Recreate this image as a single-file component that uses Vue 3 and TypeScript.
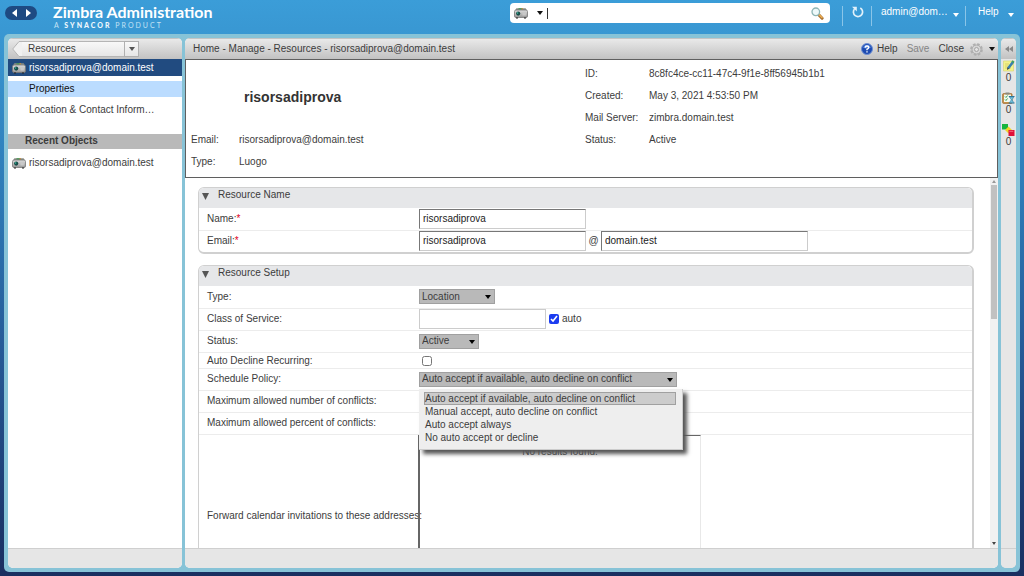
<script setup lang="ts">
import { ref } from 'vue'

const account = 'risorsadiprova@domain.test'
const search = ref('')
const resourceName = ref('risorsadiprova')
const localPart = ref('risorsadiprova')
const domain = ref('domain.test')
const cos = ref('')
const autoCos = ref(true)
const declineRecurring = ref(false)
const kind = ref('Location')
const status = ref('Active')

const policies: string[] = [
  'Auto accept if available, auto decline on conflict',
  'Manual accept, auto decline on conflict',
  'Auto accept always',
  'No auto accept or decline',
]
const policy = ref(policies[0])
const menuOpen = ref(true)

function choose(p: string) {
  policy.value = p
  menuOpen.value = false
}
</script>

<template>
  <div class="page">
    <svg width="0" height="0" class="defs" aria-hidden="true">
      <defs>
        <linearGradient id="metal" x1="0" y1="0" x2="0" y2="1">
          <stop offset="0" stop-color="#dedede" />
          <stop offset="1" stop-color="#979797" />
        </linearGradient>
        <symbol id="device" viewBox="0 0 14 12">
          <path d="M1 3.5 2.400 1.200h9.200L13 3.500z" fill="#8b8f86" />
          <path d="M4.500 1.200h4v1.200h-4z" fill="#3f9a54" />
          <path d="M7.500 1.200H9v1.200H7.500z" fill="#d78a3b" />
          <rect x=".5" y="3" width="13" height="7.500" rx="1.500" fill="url(#metal)" stroke="#777" stroke-width=".8" />
          <circle cx="4.200" cy="6.600" r="2.100" fill="#174c48" />
          <circle cx="3.600" cy="6" r=".8" fill="#3fc0a4" />
          <path d="M8.500 5.200h3.300v3.300H8.500z" fill="#c9c9c9" />
          <path d="M2 11h2M10 11h2" stroke="#222" stroke-width="1" />
        </symbol>
      </defs>
    </svg>

    <header class="top">
      <div class="history">
        <button type="button" aria-label="Back"><svg width="5" height="8" viewBox="0 0 5 8"><path d="M5 0v8L0 4z" fill="#fff" /></svg></button>
        <button type="button" aria-label="Forward"><svg width="5" height="8" viewBox="0 0 5 8"><path d="M0 0v8l5-4z" fill="#fff" /></svg></button>
      </div>
      <div class="brand">
        <div class="brand-name">Zimbra Administration</div>
        <div class="brand-sub">A <b>SYNACOR</b> PRODUCT</div>
      </div>
      <form class="search" @submit.prevent>
        <button type="button" class="search-kind" aria-label="Search type">
          <svg width="14" height="12"><use href="#device" /></svg>
          <svg width="6" height="4" viewBox="0 0 6 4"><path d="M0 0h6L3 4z" fill="#111" /></svg>
        </button>
        <span class="caret"></span>
        <input v-model="search" type="text" aria-label="Search" />
        <button type="submit" aria-label="Run search">
          <svg width="13" height="13" viewBox="0 0 13 13">
            <path d="m7.500 7.500 3.600 3.700" stroke="#9b6427" stroke-width="3" stroke-linecap="round" />
            <path d="m8 7.600 3 3" stroke="#e9aa50" stroke-width="1.600" stroke-linecap="round" />
            <circle cx="4.800" cy="4.800" r="3.800" fill="#eef9fa" stroke="#8db5b5" stroke-width="1.300" />
          </svg>
        </button>
      </form>
      <div class="session">
        <button type="button" class="refresh" aria-label="Refresh">
          <svg width="12" height="12" viewBox="0 0 12 12">
            <path d="M8.300 2A4.600 4.600 0 1 1 2.500 3" fill="none" stroke="#e2f1fa" stroke-width="1.700" />
            <path d="M0 .8h4.800v4.700z" fill="#e2f1fa" />
          </svg>
        </button>
        <button type="button" class="user"><span>admin@dom…</span><svg width="6" height="4" viewBox="0 0 6 4"><path d="M0 0h6L3 4z" fill="#fff" /></svg></button>
        <button type="button" class="help"><span>Help</span><svg width="6" height="4" viewBox="0 0 6 4"><path d="M0 0h6L3 4z" fill="#fff" /></svg></button>
      </div>
    </header>

    <div class="frame">
      <nav class="panel side">
        <div class="bar">
          <div class="crumb">
            <svg class="crumb-tip" width="10" height="16" viewBox="0 0 10 16"><path d="M10 .5H7L.7 8 7 15.500h3" fill="#f1f1f1" stroke="#b5b5b5" /></svg>
            <button type="button" class="crumb-text">Resources</button>
            <button type="button" class="crumb-drop" aria-label="Open list"><svg width="6" height="4" viewBox="0 0 6 4"><path d="M0 0h6L3 4z" fill="#555" /></svg></button>
          </div>
        </div>
        <div class="side-body">
          <a href="#" class="node current"><svg width="14" height="12"><use href="#device" /></svg>{{ account }}</a>
          <a href="#" class="leaf picked">Properties</a>
          <a href="#" class="leaf">Location &amp; Contact Inform…</a>
          <h2>Recent Objects</h2>
          <a href="#" class="node"><svg width="14" height="12"><use href="#device" /></svg>{{ account }}</a>
        </div>
        <div class="foot"></div>
      </nav>

      <main class="panel">
        <div class="bar main-bar">
          <span class="path">Home - Manage - Resources - {{ account }}</span>
          <button type="button" class="tool">
            <svg width="12" height="12" viewBox="0 0 12 12">
              <circle cx="6" cy="6" r="5.500" fill="#1d4bb1" stroke="#6d8fd4" />
              <path d="M2 4.500a4.300 4.300 0 0 1 8 0Q6 6.500 2 4.500z" fill="#5c8be0" />
              <path d="M4.200 4.600Q4.300 3 6 3t1.800 1.500Q7.800 5.500 6 6.300v.9M6 8.200v1.300" fill="none" stroke="#fff" stroke-width="1.400" />
            </svg>Help</button>
          <button type="button" class="tool" disabled>Save</button>
          <button type="button" class="tool close">Close</button>
          <button type="button" class="tool gear" aria-label="Actions">
            <svg width="13" height="13" viewBox="0 0 13 13">
              <circle cx="6.500" cy="6.500" r="5.400" fill="none" stroke="#b0b0b0" stroke-width="2" stroke-dasharray="2.600 1.640" />
              <circle cx="6.500" cy="6.500" r="4.500" fill="#d6d6d6" stroke="#aaa" />
              <circle cx="6.500" cy="6.500" r="2" fill="#e4e4e4" stroke="#a4a4a4" />
            </svg>
            <svg width="6" height="4" viewBox="0 0 6 4"><path d="M0 0h6L3 4z" fill="#111" /></svg>
          </button>
        </div>

        <section class="summary">
          <div>
            <h1>risorsadiprova</h1>
            <dl class="facts near">
              <dt>Email:</dt><dd>{{ account }}</dd>
              <dt>Type:</dt><dd>Luogo</dd>
            </dl>
          </div>
          <dl class="facts">
            <dt>ID:</dt><dd>8c8fc4ce-cc11-47c4-9f1e-8ff56945b1b1</dd>
            <dt>Created:</dt><dd>May 3, 2021 4:53:50 PM</dd>
            <dt>Mail Server:</dt><dd>zimbra.domain.test</dd>
            <dt>Status:</dt><dd>Active</dd>
          </dl>
        </section>

        <div class="scroller">
          <div class="forms">
            <section class="group">
              <h3><svg width="7" height="7" viewBox="0 0 7 7"><path d="M0 0h7L3.500 7z" fill="#555" /></svg>Resource Name</h3>
              <div class="row">
                <label for="r-name">Name:<i>*</i></label>
                <div class="field"><input id="r-name" v-model="resourceName" class="text mid" type="text" /></div>
              </div>
              <div class="row">
                <label for="r-mail">Email:<i>*</i></label>
                <div class="field">
                  <input id="r-mail" v-model="localPart" class="text mid" type="text" />
                  <span class="at">@</span>
                  <input v-model="domain" class="text wide" type="text" aria-label="Domain" />
                </div>
              </div>
            </section>

            <section class="group">
              <h3><svg width="7" height="7" viewBox="0 0 7 7"><path d="M0 0h7L3.500 7z" fill="#555" /></svg>Resource Setup</h3>
              <div class="row">
                <label for="r-type">Type:</label>
                <div class="field"><span class="pick kind"><select id="r-type" v-model="kind"><option>Location</option><option>Equipment</option></select></span></div>
              </div>
              <div class="row">
                <label for="r-cos">Class of Service:</label>
                <div class="field">
                  <input id="r-cos" v-model="cos" class="text soft" type="text" />
                  <label class="check"><input v-model="autoCos" type="checkbox" />auto</label>
                </div>
              </div>
              <div class="row">
                <label for="r-status">Status:</label>
                <div class="field"><span class="pick state"><select id="r-status" v-model="status"><option>Active</option><option>Closed</option></select></span></div>
              </div>
              <div class="row low">
                <label for="r-rec">Auto Decline Recurring:</label>
                <div class="field"><input id="r-rec" v-model="declineRecurring" class="alone" type="checkbox" /></div>
              </div>
              <div class="row">
                <label for="r-policy">Schedule Policy:</label>
                <div class="field">
                  <span class="pick policy">
                    <select id="r-policy" v-model="policy"><option v-for="p in policies" :key="p">{{ p }}</option></select>
                    <ul v-if="menuOpen" class="menu" role="listbox" aria-label="Schedule Policy">
                      <li v-for="p in policies" :key="p" role="option" :aria-selected="p === policy" :class="{ on: p === policy }" @click="choose(p)">{{ p }}</li>
                    </ul>
                  </span>
                </div>
              </div>
              <div class="row"><span class="name">Maximum allowed number of conflicts:</span><div class="field"></div></div>
              <div class="row"><span class="name">Maximum allowed percent of conflicts:</span><div class="field"></div></div>
              <div class="row tall">
                <span class="name">Forward calendar invitations to these addresses:</span>
                <div class="field"><div class="results">No results found.</div></div>
              </div>
            </section>
          </div>
          <div class="track" aria-hidden="true">
            <svg width="4" height="3" viewBox="0 0 4 3"><path d="M0 3h4L2 0z" fill="#999" /></svg>
            <div class="thumb"></div>
            <svg width="4" height="3" viewBox="0 0 4 3"><path d="M0 0h4L2 3z" fill="#444" /></svg>
          </div>
        </div>
        <div class="foot"></div>
      </main>

      <aside class="panel tasks">
        <div class="bar"><button type="button" aria-label="Expand"><svg width="8" height="6" viewBox="0 0 8 6"><path d="M4 0v6L0 3zM8 0v6L4 3z" fill="#888" /></svg></button></div>
        <div class="task">
          <svg width="12" height="12" viewBox="0 0 12 12">
            <path d="M.5 1h10v10H.5z" fill="#f3f28b" stroke="#d6d36f" stroke-width=".6" />
            <path d="M2 4h4M2 6h3M2 8h6" stroke="#d0ca62" stroke-width=".8" />
            <path d="m5 8.500 5-6.500" stroke="#3a7fae" stroke-width="2.600" />
            <path d="m4 10 .5-2.500L6 8.800z" fill="#333" />
            <path d="m9.500 2.400 1-1.400" stroke="#3fa063" stroke-width="2.600" />
          </svg>
          <span>0</span>
        </div>
        <div class="task">
          <svg width="13" height="12" viewBox="0 0 13 12">
            <rect x=".6" y="1.600" width="9.500" height="9.800" rx="1" fill="#c9944c" stroke="#99692e" stroke-width=".7" />
            <path d="M2 2.500h7v7.500H2z" fill="#f4faf2" />
            <path d="M3.500.5h4v2h-4z" fill="#8a8a80" />
            <path d="m3 4.500 1 1 1.500-2M3 7.500l1 1 1.500-2" fill="none" stroke="#39a556" />
            <path d="M6.800 4.500h5.700M6.800 11h5.700" stroke="#2c6f91" stroke-width="1.200" />
            <path d="M7.500 5h4.300L10 7.800l1.800 2.900H7.500l1.800-2.900z" fill="#72c1dd" stroke="#3a86a8" stroke-width=".6" />
          </svg>
          <span>0</span>
        </div>
        <div class="task">
          <svg width="13" height="12" viewBox="0 0 13 12">
            <path d="M0 0h6v5.500H0z" fill="#16b53e" />
            <path d="m6.500 2.500 3.500 3.500-3.500 3.500L3 6z" fill="#f0d52c" />
            <path d="M6.500 6h6v6h-6z" fill="#e0103a" />
            <path d="M7.300 6.800h4v1.200h-4z" fill="#f0566f" />
          </svg>
          <span>0</span>
        </div>
        <div class="foot"></div>
      </aside>
    </div>
  </div>
</template>

<style>
body { margin: 0; }
</style>

<style scoped>
* { box-sizing: border-box; }
.page {
  height: 100vh;
  display: flex;
  flex-direction: column;
  padding: 0 4px 4px;
  overflow: hidden;
  background: linear-gradient(#3b9dd8 0, #3793ce 10%, #2d79b5 35%, #265b98 60%, #1e3e75 85%, #1a2f60 100%);
  font: 10px/14px "Liberation Sans", Arial, sans-serif;
  color: #3c3c3c;
}
.defs { position: absolute; }
button {
  display: inline-flex;
  align-items: center;
  padding: 0;
  border: 0;
  background: none;
  color: inherit;
  font: inherit;
}
input, select { margin: 0; font: inherit; color: #222; }
svg { flex: none; display: block; }
h1, h2, h3, dl, dd, ul { margin: 0; padding: 0; }
a { color: inherit; text-decoration: none; }

.top { flex: none; height: 34px; display: flex; align-items: flex-start; }
.history {
  width: 32px;
  height: 14px;
  margin: 6px 0 0 1px;
  border-radius: 7px;
  background: #1e4a82;
  display: flex;
  align-items: center;
  justify-content: center;
  gap: 9px;
}
.brand { margin: 3px 0 0 16px; color: #fff; font-family: Lato, sans-serif; white-space: nowrap; }
.brand-name { font-size: 16px; line-height: 18px; font-weight: 700; }
.brand-sub { padding-left: 1px; font-size: 7px; line-height: 9px; letter-spacing: 2px; color: #c5e3f5; }
.brand-sub b { color: #f0f8fd; font-weight: 900; }
.search {
  width: 320px;
  height: 20px;
  margin: 3px 12px 0 auto;
  padding: 0 6px 0 4px;
  border-radius: 4px;
  background: #fff;
  display: flex;
  align-items: center;
}
.search-kind { gap: 9px; }
.caret { width: 1px; height: 11px; margin-left: 4px; background: #333; }
.search input { flex: 1; min-width: 0; border: 0; outline: 0; background: none; }
.session { display: flex; margin-top: 6px; color: #fff; }
.session button { height: 20px; border-left: 1px solid #8ac5e8; justify-content: space-between; align-items: flex-start; }
.refresh { width: 29px; padding: 0 8px 0 9px; }
.user { width: 94px; padding: 0 6px 0 9px; }
.help { width: 55px; padding: 0 6px 0 12px; }
.user svg, .help svg { margin-top: 7px; }
.session span { line-height: 12px; }

.frame {
  flex: 1;
  min-height: 0;
  display: grid;
  grid-template-columns: 174px minmax(0, 1fr) 15px;
  gap: 3px;
  padding: 4px;
  border-radius: 5px;
  background: #87c3d7;
}
.panel {
  display: flex;
  flex-direction: column;
  min-height: 0;
  min-width: 0;
  border-radius: 5px;
  background: #fff;
  overflow: hidden;
}
.bar {
  flex: none;
  height: 21px;
  display: flex;
  align-items: center;
  background: linear-gradient(#e9e9e9, #c2c2c2);
  border-top: 1px solid #c4c4c4;
}
.foot { flex: none; height: 20px; margin-top: auto; background: #e6e6e6; border-top: 1px solid #cfcfcf; }

.crumb { display: flex; height: 16px; margin-left: 4px; }
.crumb-text { width: 102px; padding-left: 6px; background: linear-gradient(#f8f8f8, #e6e6e6); border: solid #b5b5b5; border-width: 1px 0; }
.crumb-drop { width: 15px; justify-content: center; background: linear-gradient(#f8f8f8, #e6e6e6); border: 1px solid #b0b0b0; }
.side-body { display: flex; flex-direction: column; }
.node { display: flex; align-items: center; gap: 3px; height: 17px; line-height: 13px; padding-left: 4px; }
.node.current { background: #214b80; color: #fff; }
.leaf { height: 16px; line-height: 16px; margin-top: 5px; padding-left: 21px; }
.leaf.picked { background: #bbdcff; color: #111; }
h2 { height: 15px; margin: 16px 0 5px; padding-left: 17px; background: #b9b9b9; font-size: 10px; line-height: 13px; }

.main-bar { padding: 0 3px 0 8px; line-height: 12px; }
.path { flex: 1; white-space: nowrap; }
.tool { gap: 4px; margin-left: 9px; }
.tool:disabled { color: #858585; }
.gear { margin-left: 6px; gap: 6px; }

.summary {
  flex: none;
  height: 119px;
  display: grid;
  grid-template-columns: 394px 1fr;
  padding: 4px 5px;
  border: 1px solid #5f5f5f;
}
.summary h1 { padding: 22px 0 21px 53px; font-size: 14px; line-height: 22px; color: #333; }
.facts { display: grid; grid-template-columns: 64px 1fr; grid-auto-rows: 22px; line-height: 20px; }
.facts.near { grid-template-columns: 48px 1fr; margin-top: 1px; }

.scroller { flex: 1; min-height: 0; display: flex; overflow: hidden; }
.forms { flex: 1; min-width: 0; padding: 9px 16px 0 13px; overflow: hidden; }
.group { margin-bottom: 11px; border: 1px solid #d0d0d0; border-right-width: 2px; border-bottom-width: 2px; border-radius: 6px; }
h3 {
  display: flex;
  align-items: flex-start;
  gap: 9px;
  height: 20px;
  padding-left: 3px;
  border-radius: 5px 5px 0 0;
  background: #e6e7e9;
  font-size: 10px;
  line-height: 13px;
  font-weight: 400;
}
h3 svg { margin-top: 5px; }
.row { display: grid; grid-template-columns: 220px 1fr; min-height: 22px; line-height: 12px; padding-bottom: 1px; align-items: center; }
.row + .row { border-top: 1px solid #ececec; }
.row > label, .name { padding-left: 8px; white-space: nowrap; }
.row i { color: #e00020; font-style: normal; }
.row.low { min-height: 16px; padding: 0; }
.row.tall { min-height: 164px; }
.field { display: flex; align-items: center; }
.text { height: 20px; padding: 0 3px 1px; border: 1px solid; border-color: #777 #ccc #ccc #777; background: #fff; outline: 0; }
.text.soft { width: 127px; border-color: #ccc; }
.mid { width: 167px; }
.wide { width: 207px; }
.at { width: 15px; text-align: center; }
.check { display: flex; align-items: center; gap: 3px; margin-left: 3px; }
input[type="checkbox"] { width: 10px; height: 10px; accent-color: #1c3cf0; }
.alone { margin-left: 3px; }
.pick { position: relative; display: flex; height: 15px; }
.pick::after {
  content: "";
  position: absolute;
  right: 4px;
  top: 6px;
  border: 3px solid transparent;
  border-top: 4px solid #000;
  border-bottom: 0;
}
.pick select {
  width: 100%;
  padding: 0 2px;
  border: 1px solid #a0a0a0;
  border-radius: 0;
  background: #b9b9b9;
  color: #3c3c3c;
  line-height: 12px;
  appearance: none;
}
.kind { width: 76px; }
.state { width: 60px; }
.policy { width: 258px; }
.menu {
  position: absolute;
  z-index: 2;
  left: 0;
  top: 17px;
  width: 264px;
  height: 61px;
  padding: 3px 6px 6px 5px;
  background: #eee;
  border: solid #ccc;
  border-width: 0 1px 1px 0;
  box-shadow: 4px 4px 4px #555;
  list-style: none;
  line-height: 13px;
  white-space: nowrap;
}
.menu li { padding-left: 1px; }
.menu .on { padding-left: 0; border: 1px solid #a0a0a0; background: #ccc; line-height: 11px; }
.results {
  width: 283px;
  height: 162px;
  margin-left: -1px;
  padding-top: 10px;
  border: solid #e8e8e8;
  border-width: 1px 1px 0 2px;
  border-left-color: #666;
  border-top-color: #666;
  text-align: center;
}
.track { flex: none; width: 8px; display: flex; flex-direction: column; align-items: center; background: #f1f1f1; padding: 2px 0 3px; }
.thumb { flex: none; width: 6px; height: 134px; margin: 2px 0 auto; background: #c1c1c1; }

.tasks { background: #e6e6e6; align-items: center; }
.tasks .bar, .tasks .foot { width: 100%; justify-content: center; }
.task { display: flex; flex-direction: column; align-items: center; height: 32px; padding-top: 1px; line-height: 12px; }
</style>
